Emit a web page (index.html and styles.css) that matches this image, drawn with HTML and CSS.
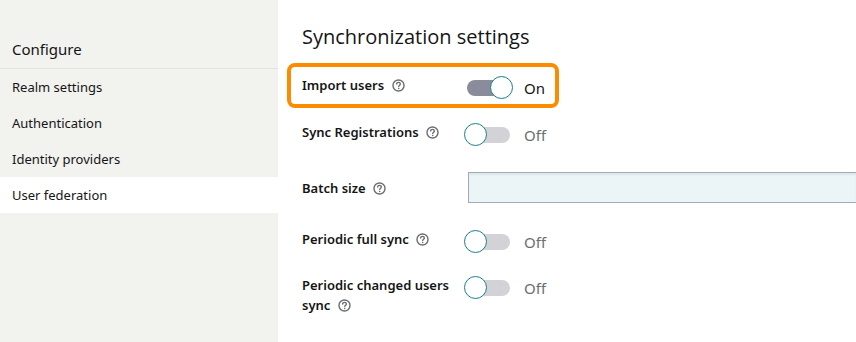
FILE: index.html
```html
<!DOCTYPE html>
<html>
<head>
  <title>Synchronization settings</title>
<link rel="stylesheet" href="styles.css">
</head>
<body>
  <div class="page">
    <div class="sidebar">
      <div class="nav_head">Configure</div>
      <div class="nav_item">Realm settings</div>
      <div class="nav_item">Authentication</div>
      <div class="nav_item">Identity providers</div>
      <div class="nav_item active">User federation</div>
    </div>
    <div class="main">
      <h2 class="title">Synchronization settings</h2>

      <div class="row hl">
        <div class="lbl">Import users <span class="help"><svg width="13" height="13" viewBox="0 0 12 12"><circle cx="6" cy="6" r="5.1" fill="none" stroke="#6a6e73" stroke-width="1.3"/><path d="M4.3 4.7c0-1 .8-1.6 1.7-1.6s1.7.6 1.7 1.5c0 1.2-1.5 1.2-1.5 2.4" fill="none" stroke="#6a6e73" stroke-width="1.3" stroke-linecap="round"/><circle cx="6.2" cy="8.8" r=".75" fill="#6a6e73"/></svg></span></div>
        <div class="switch on"><span class="track"></span><span class="knob"></span></div>
        <span class="state">On</span>
      </div>

      <div class="row r_sync">
        <div class="lbl">Sync Registrations <span class="help"><svg width="13" height="13" viewBox="0 0 12 12"><circle cx="6" cy="6" r="5.1" fill="none" stroke="#6a6e73" stroke-width="1.3"/><path d="M4.3 4.7c0-1 .8-1.6 1.7-1.6s1.7.6 1.7 1.5c0 1.2-1.5 1.2-1.5 2.4" fill="none" stroke="#6a6e73" stroke-width="1.3" stroke-linecap="round"/><circle cx="6.2" cy="8.8" r=".75" fill="#6a6e73"/></svg></span></div>
        <div class="switch"><span class="track"></span><span class="knob"></span></div>
        <span class="state off">Off</span>
      </div>

      <div class="row r_batch">
        <div class="lbl">Batch size <span class="help"><svg width="13" height="13" viewBox="0 0 12 12"><circle cx="6" cy="6" r="5.1" fill="none" stroke="#6a6e73" stroke-width="1.3"/><path d="M4.3 4.7c0-1 .8-1.6 1.7-1.6s1.7.6 1.7 1.5c0 1.2-1.5 1.2-1.5 2.4" fill="none" stroke="#6a6e73" stroke-width="1.3" stroke-linecap="round"/><circle cx="6.2" cy="8.8" r=".75" fill="#6a6e73"/></svg></span></div>
        <input class="field" type="text">
      </div>

      <div class="row r_full">
        <div class="lbl">Periodic full sync <span class="help"><svg width="13" height="13" viewBox="0 0 12 12"><circle cx="6" cy="6" r="5.1" fill="none" stroke="#6a6e73" stroke-width="1.3"/><path d="M4.3 4.7c0-1 .8-1.6 1.7-1.6s1.7.6 1.7 1.5c0 1.2-1.5 1.2-1.5 2.4" fill="none" stroke="#6a6e73" stroke-width="1.3" stroke-linecap="round"/><circle cx="6.2" cy="8.8" r=".75" fill="#6a6e73"/></svg></span></div>
        <div class="switch"><span class="track"></span><span class="knob"></span></div>
        <span class="state off">Off</span>
      </div>

      <div class="row r_changed">
        <div class="lbl">Periodic changed users sync <span class="help"><svg width="13" height="13" viewBox="0 0 12 12"><circle cx="6" cy="6" r="5.1" fill="none" stroke="#6a6e73" stroke-width="1.3"/><path d="M4.3 4.7c0-1 .8-1.6 1.7-1.6s1.7.6 1.7 1.5c0 1.2-1.5 1.2-1.5 2.4" fill="none" stroke="#6a6e73" stroke-width="1.3" stroke-linecap="round"/><circle cx="6.2" cy="8.8" r=".75" fill="#6a6e73"/></svg></span></div>
        <div class="switch"><span class="track"></span><span class="knob"></span></div>
        <span class="state off">Off</span>
      </div>
    </div>
  </div>
</body>
</html>
```
FILE: styles.css
```css
body {
  margin: 0;
  font-family: "Noto Sans", sans-serif;
  color: #151515;
  overflow: hidden;
}
.page {
  display: flex;
  width: 856px;
  height: 342px;
}
.sidebar {
  width: 278px;
  flex-shrink: 0;
  background-color: #f2f2ef;
}
.nav_head {
  font-size: 15px;
  line-height: 20px;
  padding: 39px 12px 9px;
  border-bottom: 1px solid #e3e3e0;
}
.nav_item {
  font-size: 13px;
  height: 36px;
  line-height: 36px;
  padding-left: 12px;
}
.nav_item.active {
  background-color: #fff;
}
.main {
  flex: 1;
  padding: 25px 0 0 24px;
  overflow: hidden;
  background-color: #fff;
}
.title {
  margin: 0;
  font-family: "Open Sans", sans-serif;
  font-size: 20px;
  font-weight: 500;
  line-height: 24px;
}
.row {
  display: flex;
  align-items: flex-start;
}
.lbl {
  width: 162px;
  flex-shrink: 0;
  font-size: 13px;
  font-weight: 600;
  line-height: 20px;
}
.help {
  display: inline-block;
  vertical-align: -2px;
  margin-left: 4px;
}
.help svg {
  display: block;
}
.hl {
  margin: 14px 0 0 -15px;
  width: 253px;
  padding: 8px 0 4px 11px;
  border: 4px solid #fb8c00;
  border-radius: 8px;
}
.r_sync {
  margin-top: 14px;
}
.r_batch {
  margin-top: 25px;
  align-items: center;
}
.r_full {
  margin-top: 26px;
}
.r_changed {
  margin-top: 21px;
}
.r_changed .lbl {
  width: 150px;
  margin-right: 12px;
}
.switch {
  position: relative;
  width: 50px;
  height: 24px;
  margin-top: 1px;
  flex-shrink: 0;
}
.track {
  position: absolute;
  left: 3px;
  top: 4px;
  width: 43px;
  height: 16px;
  border-radius: 8px;
  background-color: #d2d2d7;
}
.knob {
  position: absolute;
  left: 0;
  top: 0;
  width: 21px;
  height: 21px;
  border-radius: 50%;
  background-color: #fff;
  border: 1.5px solid #16808c;
}
.switch.on .track {
  background-color: #8b8c9b;
}
.switch.on .knob {
  left: 26px;
}
.state {
  margin-left: 10px;
  font-size: 15px;
  line-height: 24px;
  margin-top: 1px;
}
.state.off {
  color: #6a6e73;
}
.field {
  margin-left: 4px;
  width: 420px;
  height: 31px;
  box-sizing: border-box;
  border: 1px solid #a3abb5;
  border-right: 0;
  background-color: #ebf5f7;
  box-shadow: inset 0 2px 2px rgba(0,0,0,0.06);
  padding: 0 8px;
}
```
